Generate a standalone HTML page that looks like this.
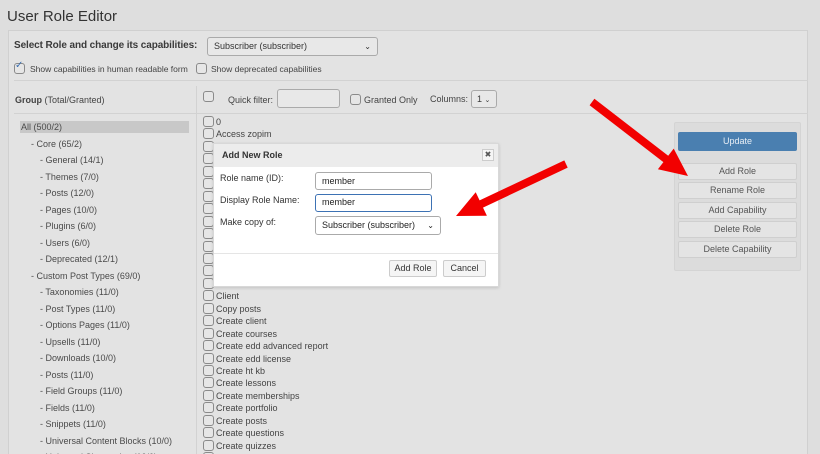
<!DOCTYPE html>
<html style="overflow:hidden"><head><meta charset="utf-8"><style>
*{box-sizing:border-box;margin:0;padding:0}
html,body{width:820px;height:454px;overflow:hidden}
body{background:#dedede;font-family:"Liberation Sans",Arial,sans-serif;color:#3a3a3a;position:relative}
.a{position:absolute;white-space:nowrap}
.cb{position:absolute;width:11px;height:11px;border:1px solid #8a8a8a;border-radius:3px;background:#e6e6e6}
.t{font-size:9px;color:#444}
.g{font-size:9px;color:#4a4a4a}
.btn{position:absolute;left:678px;width:119px;height:17px;border:1px solid #cfcfcf;border-radius:2px;background:#e4e4e4;font-size:9px;color:#555;text-align:center;line-height:15px}
.inp{position:absolute;background:#fff;border:1px solid #999;border-radius:3px;font-size:9px;padding-left:6px;color:#222}
</style></head><body>
<div class="a" style="left:7px;top:8px;font-size:15px;color:#333">User Role Editor</div>
<div class="a" style="left:8px;top:30px;width:800px;height:430px;background:#e3e3e3;border:1px solid #d0d0d0"></div>
<div class="a" style="left:14px;top:40px;font-size:10px;font-weight:bold;color:#3a3a3a;letter-spacing:-0.1px">Select Role and change its capabilities:</div>
<div class="inp" style="left:207px;top:37px;width:171px;height:19px;background:#e8e8e8;border-color:#aaa;line-height:17px;color:#333">Subscriber (subscriber)<span style="position:absolute;right:6px;font-size:8px">&#8964;</span></div>
<div class="cb" style="left:14px;top:63px;background:#e6e6e6"></div>
<div class="a" style="left:15px;top:60px;font-size:10px;color:#3b6fb0">&#10003;</div>
<div class="a t" style="left:30px;top:64px;font-size:8.5px">Show capabilities in human readable form</div>
<div class="cb" style="left:196px;top:63px"></div>
<div class="a t" style="left:211px;top:64px;font-size:8.5px">Show deprecated capabilities</div>
<div class="a" style="left:14px;top:80px;width:794px;height:1px;background:#d2d2d2"></div>
<div class="a" style="left:196px;top:86px;width:1px;height:370px;background:#d2d2d2"></div>
<div class="a" style="left:14px;top:113px;width:794px;height:1px;background:#d2d2d2"></div>
<div class="a" style="left:15px;top:95px;font-size:9px;color:#444"><b>Group</b> (Total/Granted)</div>
<div class="cb" style="left:203px;top:91px"></div>
<div class="a t" style="left:228px;top:95px">Quick filter:</div>
<div class="a" style="left:277px;top:89px;width:63px;height:19px;border:1px solid #aaa;border-radius:3px;background:#e8e8e8"></div>
<div class="cb" style="left:350px;top:94px"></div>
<div class="a t" style="left:364px;top:95px">Granted Only</div>
<div class="a t" style="left:430px;top:94px">Columns:</div>
<div class="a" style="left:471px;top:90px;width:26px;height:18px;border:1px solid #aaa;border-radius:3px;background:#e8e8e8;font-size:9px;padding:3px 0 0 5px">1 <span style="font-size:7px">&#8964;</span></div>
<div class="a" style="left:20px;top:121px;width:169px;height:12px;background:#c8c8c8"></div>
<div class="a g" style="left:21px;top:122px">All (500/2)</div>
<div class="a g" style="left:31px;top:139px">- Core (65/2)</div>
<div class="a g" style="left:40px;top:155px">- General (14/1)</div>
<div class="a g" style="left:40px;top:172px">- Themes (7/0)</div>
<div class="a g" style="left:40px;top:188px">- Posts (12/0)</div>
<div class="a g" style="left:40px;top:205px">- Pages (10/0)</div>
<div class="a g" style="left:40px;top:221px">- Plugins (6/0)</div>
<div class="a g" style="left:40px;top:238px">- Users (6/0)</div>
<div class="a g" style="left:40px;top:254px">- Deprecated (12/1)</div>
<div class="a g" style="left:31px;top:271px">- Custom Post Types (69/0)</div>
<div class="a g" style="left:40px;top:287px">- Taxonomies (11/0)</div>
<div class="a g" style="left:40px;top:304px">- Post Types (11/0)</div>
<div class="a g" style="left:40px;top:320px">- Options Pages (11/0)</div>
<div class="a g" style="left:40px;top:337px">- Upsells (11/0)</div>
<div class="a g" style="left:40px;top:353px">- Downloads (10/0)</div>
<div class="a g" style="left:40px;top:370px">- Posts (11/0)</div>
<div class="a g" style="left:40px;top:386px">- Field Groups (11/0)</div>
<div class="a g" style="left:40px;top:403px">- Fields (11/0)</div>
<div class="a g" style="left:40px;top:419px">- Snippets (11/0)</div>
<div class="a g" style="left:40px;top:436px">- Universal Content Blocks (10/0)</div>
<div class="a g" style="left:40px;top:452px">- Universal Shortcodes (10/0)</div>
<div id="caps"></div>
<script>
var names=["0","Access zopim","","","","","","","","","","","","","Client","Copy posts","Create client","Create courses","Create edd advanced report","Create edd license","Create ht kb","Create lessons","Create memberships","Create portfolio","Create posts","Create questions","Create quizzes",""];
var h="";for(var i=0;i<names.length;i++){var y=116+i*12.45;h+='<div class="cb" style="left:203px;top:'+y+'px"></div><div class="a t" style="left:216px;top:'+(y+1)+'px">'+names[i]+'</div>';}
document.getElementById("caps").innerHTML=h;
</script>
<div class="a" style="left:213px;top:143px;width:286px;height:144px;background:#fff;border:1px solid #d8d8d8;box-shadow:0 1px 3px rgba(0,0,0,.15)"></div>
<div class="a" style="left:214px;top:144px;width:284px;height:23px;background:#ececec"></div>
<div class="a" style="left:222px;top:150px;font-size:9px;font-weight:bold;color:#333">Add New Role</div>
<div class="a" style="left:482px;top:149px;width:12px;height:12px;border:1px solid #ccc;background:#f5f5f5;font-size:8px;text-align:center;line-height:10px;color:#555">&#10006;</div>
<div class="a t" style="left:220px;top:173px;color:#333">Role name (ID):</div>
<div class="a t" style="left:220px;top:195px;color:#333">Display Role Name:</div>
<div class="a t" style="left:220px;top:217px;color:#333">Make copy of:</div>
<div class="inp" style="left:315px;top:172px;width:117px;height:18px;line-height:16px;border-color:#aaa">member</div>
<div class="inp" style="left:315px;top:194px;width:117px;height:18px;line-height:15px;border:1.5px solid #3d72b4">member</div>
<div class="inp" style="left:315px;top:216px;width:126px;height:19px;line-height:17px;border-color:#aaa">Subscriber (subscriber)<span style="position:absolute;right:6px;font-size:8px">&#8964;</span></div>
<div class="a" style="left:214px;top:253px;width:284px;height:1px;background:#e5e5e5"></div>
<div class="a" style="left:389px;top:260px;width:48px;height:17px;border:1px solid #ccc;border-radius:2px;background:#f5f5f5;font-size:9px;text-align:center;line-height:15px;color:#333">Add Role</div>
<div class="a" style="left:443px;top:260px;width:43px;height:17px;border:1px solid #ccc;border-radius:2px;background:#f5f5f5;font-size:9px;text-align:center;line-height:15px;color:#333">Cancel</div>
<div class="a" style="left:674px;top:122px;width:127px;height:149px;background:#dcdcdc;border:1px solid #d4d4d4;border-radius:2px"></div>
<div class="a" style="left:678px;top:132px;width:119px;height:19px;background:#4a7fb0;border-radius:2px;color:#e8eef5;font-size:9px;text-align:center;line-height:19px">Update</div>
<div class="btn" style="top:163px">Add Role</div>
<div class="btn" style="top:182px">Rename Role</div>
<div class="btn" style="top:202px">Add Capability</div>
<div class="btn" style="top:221px">Delete Role</div>
<div class="btn" style="top:241px">Delete Capability</div>
<svg class="a" style="left:0;top:0" width="820" height="454">
<polygon fill="#f20000" points="589.6,105.2 594.4,98.8 668.2,155.7 673.7,148.6 688,176 657.9,169.2 663.4,162.1"/>
<polygon fill="#f20000" points="567.7,167.6 564.3,160.4 479.6,200.4 475.7,192.2 456,216 486.9,215.8 483,207.6"/>
</svg>
</body></html>
